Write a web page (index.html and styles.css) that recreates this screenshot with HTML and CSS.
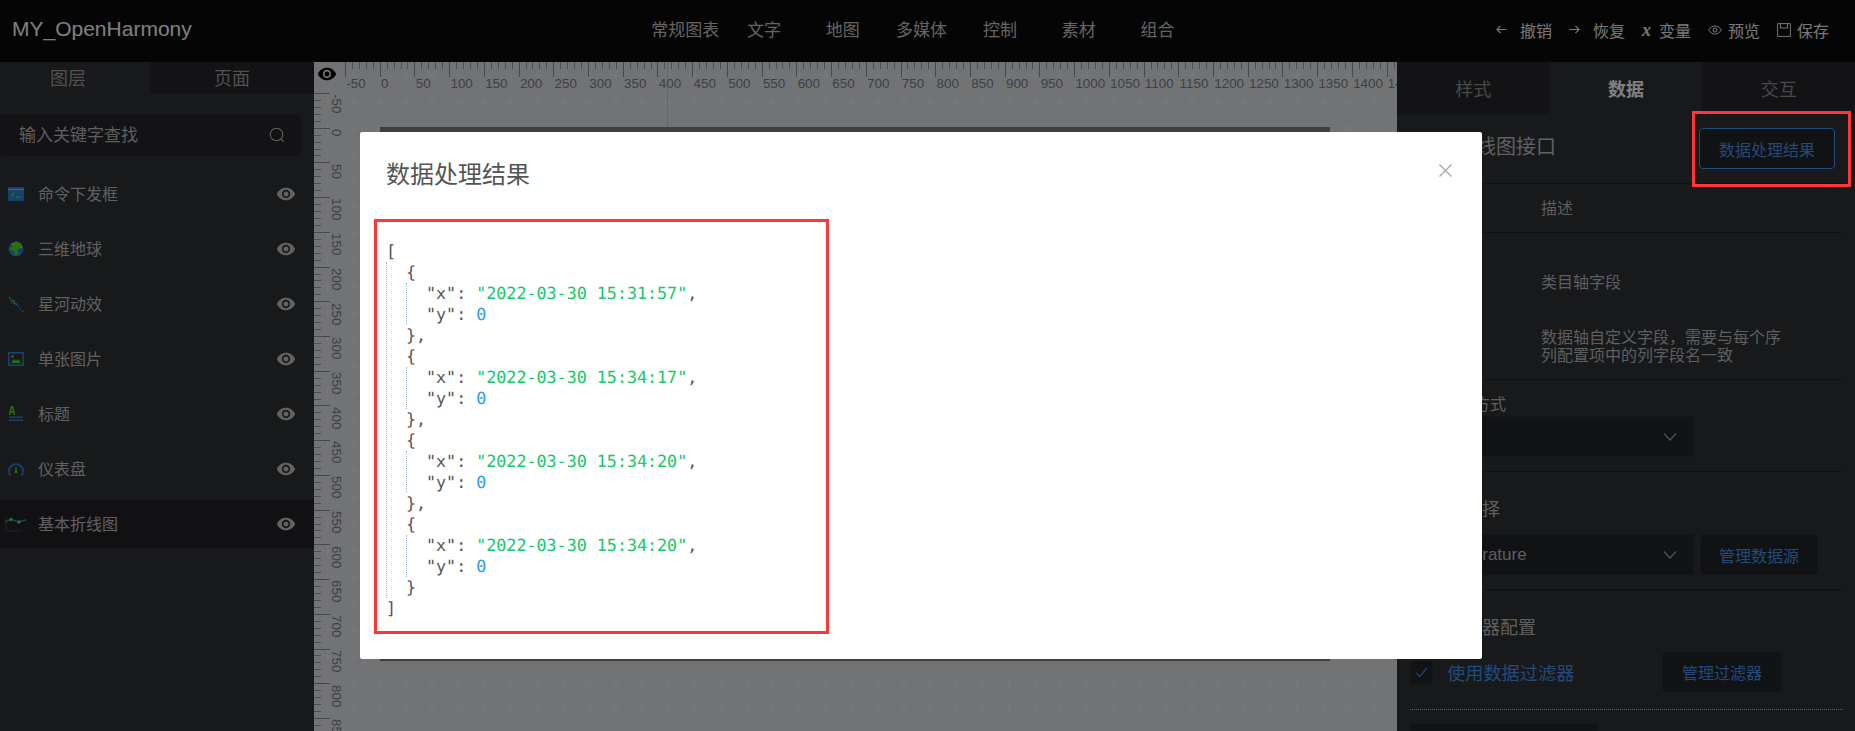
FILE: index.html
```html
<!DOCTYPE html>
<html lang="zh-CN">
<head>
<meta charset="utf-8">
<title>MY_OpenHarmony</title>
<link rel="stylesheet" href="styles.css">
</head>
<body>
<svg class="sprite" aria-hidden="true">
  <symbol id="eye" viewBox="0 0 24 24"><path d="M12 4.500C7 4.500 2.730 7.610 1 12c1.730 4.390 6 7.500 11 7.500s9.270-3.110 11-7.500c-1.730-4.390-6-7.500-11-7.500zM12 17c-2.760 0-5-2.240-5-5s2.240-5 5-5 5 2.240 5 5-2.240 5-5 5zm0-8c-1.660 0-3 1.340-3 3s1.340 3 3 3 3-1.340 3-3-1.340-3-3-3z"/></symbol>
  <symbol id="chev" viewBox="0 0 14 10"><path d="M1 1.500l6 6.500 6-6.500" fill="none" stroke="currentColor" stroke-width="1.200"/></symbol>
</svg>

<header class="topbar">
  <div class="logo">MY_OpenHarmony</div>
  <nav class="nav">
    <span class="nav-item">常规图表</span>
    <span class="nav-item">文字</span>
    <span class="nav-item">地图</span>
    <span class="nav-item">多媒体</span>
    <span class="nav-item">控制</span>
    <span class="nav-item">素材</span>
    <span class="nav-item">组合</span>
  </nav>
  <div class="actions">
    <span class="action wide"><svg class="ai" viewBox="0 0 12 12"><path d="M11.500 6H1M5 2L1 6l4 4" fill="none" stroke="currentColor" stroke-width="1.300"/></svg>撤销</span>
    <span class="action wide"><svg class="ai" viewBox="0 0 12 12"><path d="M.5 6H11M7 2l4 4-4 4" fill="none" stroke="currentColor" stroke-width="1.300"/></svg>恢复</span>
    <span class="action mid"><i class="var-x">x</i>变量</span>
    <span class="action"><svg class="ai-l" viewBox="0 0 14 14"><path d="M.7 7C2.200 4.300 4.400 3 7 3s4.800 1.300 6.300 4c-1.500 2.700-3.700 4-6.300 4S2.200 9.700.7 7z" fill="none" stroke="currentColor"/><circle cx="7" cy="7" r="2" fill="none" stroke="currentColor"/></svg>预览</span>
    <span class="action"><svg class="ai-l" viewBox="0 0 14 14"><path d="M.6.6h12.800v12.800H.6zM3.500.6V5h7V.6" fill="none" stroke="currentColor"/></svg>保存</span>
  </div>
</header>

<main class="workspace">
  <aside class="layers">
    <div class="layer-tabs">
      <div class="layer-tab on">图层</div>
      <div class="layer-tab">页面</div>
    </div>
    <div class="search">
      <span class="search-txt">输入关键字查找</span>
      <svg class="search-ic" viewBox="0 0 16 16"><circle cx="7.500" cy="7.500" r="6.300" fill="none" stroke="currentColor" stroke-width="1.100"/><path d="M12 12l2.800 2.800" stroke="currentColor" stroke-width="1.100"/></svg>
    </div>
    <ul class="layer-list">
      <li class="layer">
        <svg class="li-ic" viewBox="0 0 16 16"><rect y="1" width="16" height="14" fill="#2f80d8"/><rect y="3" width="16" height="1" fill="#9cc8f5"/><path d="M6 7L4 9l2 2" fill="none" stroke="#56e020" stroke-width="1.500"/><path d="M8 11h4" stroke="#56e020" stroke-width="1.500"/></svg>
        <span class="li-name">命令下发框</span>
        <svg class="li-eye"><use href="#eye"/></svg>
      </li>
      <li class="layer">
        <svg class="li-ic" viewBox="0 0 16 16"><circle cx="8" cy="8" r="7.500" fill="#2f80d8"/><path d="M3 2.500L8 .5l5 2 2 4.500-3.500.5-2 1.500.5 4-2.500 2-1-4-3-1.500L1 7l3.500-1L3 2.500z" fill="#56e020"/></svg>
        <span class="li-name">三维地球</span>
        <svg class="li-eye"><use href="#eye"/></svg>
      </li>
      <li class="layer">
        <svg class="li-ic" viewBox="0 0 18 18"><g fill="#56e020"><rect x="1" y="1" width="1.500" height="1.500"/><rect x="4" y="4" width="2" height="2"/><rect x="6" y="7" width="2" height="2"/><rect x="9" y="9" width="1.500" height="1.500"/><rect x="3" y="6" width="1.500" height="1.500"/></g><g fill="#3a9cff"><rect x="2" y="3" width="1.500" height="1.500"/><rect x="6" y="5" width="2" height="2"/><rect x="8" y="8" width="2" height="2"/><rect x="11" y="11" width="1.500" height="1.500"/><rect x="13" y="14" width="1.500" height="1.500"/><rect x="16" y="16.500" width="1.500" height="1.500"/></g></svg>
        <span class="li-name">星河动效</span>
        <svg class="li-eye"><use href="#eye"/></svg>
      </li>
      <li class="layer">
        <svg class="li-ic" viewBox="0 0 16 16"><rect x=".8" y="1.800" width="14.400" height="12.400" fill="none" stroke="#2f80d8" stroke-width="1.600"/><path d="M3 12l3-4 2 2 2-2 3 4z" fill="#56e020"/><circle cx="4.500" cy="5.500" r="1.300" fill="#56e020"/></svg>
        <span class="li-name">单张图片</span>
        <svg class="li-eye"><use href="#eye"/></svg>
      </li>
      <li class="layer">
        <svg class="li-ic" viewBox="0 0 16 16"><path d="M1.500 9L3.500.5h1L6.500 9M2.500 6h3" fill="none" stroke="#56e020" stroke-width="1.400"/><rect x="1" y="10.500" width="14" height="1.500" fill="#2f80d8"/><rect x="1" y="13.500" width="14" height="1.500" fill="#2f80d8"/></svg>
        <span class="li-name">标题</span>
        <svg class="li-eye"><use href="#eye"/></svg>
      </li>
      <li class="layer">
        <svg class="li-ic" viewBox="0 0 16 16"><path d="M2.500 14.500A7 7 0 1 1 13.500 14.500" fill="none" stroke="#2f80d8" stroke-width="1.800"/><path d="M8 5l1.500 7h-3z" fill="#56e020"/></svg>
        <span class="li-name">仪表盘</span>
        <svg class="li-eye"><use href="#eye"/></svg>
      </li>
      <li class="layer active">
        <svg class="li-ic wide-ic" viewBox="0 0 22 16"><path d="M1 1v14h16" fill="none" stroke="#444" stroke-width="1.200"/><path d="M0 6l6-3 7 3 8-2" fill="none" stroke="#2f80d8" stroke-width="1.400"/><circle cx="6" cy="3.500" r="1.800" fill="#56e020"/><circle cx="14" cy="6" r="1.800" fill="#56e020"/></svg>
        <span class="li-name">基本折线图</span>
        <svg class="li-eye"><use href="#eye"/></svg>
      </li>
    </ul>
  </aside>

  <section class="canvas">
    <svg class="grid" aria-hidden="true">
      <defs><pattern id="plus" width="26.200" height="26.400" patternUnits="userSpaceOnUse"><path d="M9 13.500h9M13.500 9v9" stroke="#f2f4f8" stroke-width="1"/></pattern></defs>
      <rect width="100%" height="100%" fill="url(#plus)"/>
    </svg>
    <div class="guide"></div>
    <div class="screen"></div>
    <div class="ruler-top">
      <div class="ticks-top"></div>
      <div class="nums-top">
        <span>-50</span><span>0</span><span>50</span><span>100</span><span>150</span><span>200</span><span>250</span><span>300</span><span>350</span><span>400</span><span>450</span><span>500</span><span>550</span><span>600</span><span>650</span><span>700</span><span>750</span><span>800</span><span>850</span><span>900</span><span>950</span><span>1000</span><span>1050</span><span>1100</span><span>1150</span><span>1200</span><span>1250</span><span>1300</span><span>1350</span><span>1400</span><span>1450</span>
      </div>
    </div>
    <div class="ruler-left">
      <div class="ticks-left"></div>
      <div class="nums-left">
        <span>-50</span><span>0</span><span>50</span><span>100</span><span>150</span><span>200</span><span>250</span><span>300</span><span>350</span><span>400</span><span>450</span><span>500</span><span>550</span><span>600</span><span>650</span><span>700</span><span>750</span><span>800</span><span>850</span>
      </div>
    </div>
    <svg class="ruler-eye"><use href="#eye"/></svg>
  </section>

  <aside class="props">
    <div class="prop-tabs">
      <div class="prop-tab">样式</div>
      <div class="prop-tab on">数据</div>
      <div class="prop-tab">交互</div>
    </div>
    <div class="prop-title">
      <h2 class="prop-h">基本折线图接口</h2>
      <button class="btn btn-primary">数据处理结果</button>
    </div>
    <div class="prop-body">
      <div class="tbl-head"><span>字段</span><span>描述</span></div>
      <div class="tbl-rows">
        <div class="tbl-row r1"><span>x</span><span>类目轴字段</span></div>
        <div class="tbl-row r2"><span>y</span><span>数据轴自定义字段，需要与每个序列配置项中的列字段名一致</span></div>
      </div>
      <div class="sec sec-a">
        <div class="lbl-sm">数据请求方式</div>
        <div class="sel-row"><div class="sel"><span>GET</span><svg class="chev"><use href="#chev"/></svg></div></div>
      </div>
      <div class="sec sec-b">
        <div class="lbl">数据源选择</div>
        <div class="sel-row">
          <div class="sel"><span>temperature</span><svg class="chev"><use href="#chev"/></svg></div>
          <button class="btn btn-plain src">管理数据源</button>
        </div>
      </div>
      <div class="sec-c">
        <div class="lbl">数据过滤器配置</div>
        <div class="filter-row">
          <span class="check"><svg viewBox="0 0 14 12"><path d="M1 6l4 4.500L13 1" fill="none" stroke="currentColor" stroke-width="1.200"/></svg></span>
          <span class="filter-txt">使用数据过滤器</span>
          <button class="btn btn-plain flt">管理过滤器</button>
        </div>
        <div class="dots"></div>
        <div class="bottom-box"></div>
      </div>
    </div>
  </aside>
</main>

<div class="mask">
  <div class="modal">
    <div class="modal-head">
      <div class="modal-title">数据处理结果</div>
      <svg class="close" viewBox="0 0 13 13"><path d="M.5.5l12 12M12.500.5l-12 12" stroke="currentColor" stroke-width="1.100"/></svg>
    </div>
    <div class="json-box">
      <div class="json">
        <div>[</div>
        <div class="ind">
          <div>{</div>
          <div class="ind"><div>"x": <b class="s">"2022-03-30 15:31:57"</b>,</div><div>"y": <b class="n">0</b></div></div>
          <div>},</div>
          <div>{</div>
          <div class="ind"><div>"x": <b class="s">"2022-03-30 15:34:17"</b>,</div><div>"y": <b class="n">0</b></div></div>
          <div>},</div>
          <div>{</div>
          <div class="ind"><div>"x": <b class="s">"2022-03-30 15:34:20"</b>,</div><div>"y": <b class="n">0</b></div></div>
          <div>},</div>
          <div>{</div>
          <div class="ind"><div>"x": <b class="s">"2022-03-30 15:34:20"</b>,</div><div>"y": <b class="n">0</b></div></div>
          <div>}</div>
        </div>
        <div>]</div>
      </div>
    </div>
  </div>
  <div class="note-box"></div>
</div>
</body>
</html>
```
FILE: styles.css
```css
* { box-sizing: border-box; }
html, body { margin: 0; height: 731px; overflow: hidden; }
body {
  width: 1855px;
  font-family: "Liberation Sans", "Noto Sans CJK SC", sans-serif;
  font-size: 16px;
  color: #c0c0c0;
  background: #313236;
}
.sprite { width: 0; height: 0; position: absolute; }

/* top bar */
.topbar { height: 62px; background: #0a0a0a; display: flex; align-items: center; }
.logo { width: 633px; margin-left: 12px; font-size: 21px; color: #fff; white-space: nowrap; margin-top: -4px; }
.nav { display: flex; margin-top: -6px; margin-left: 1px; }
.nav-item { width: 78.7px; text-align: center; font-size: 17px; color: #c8c8c8; white-space: nowrap; }
.actions { margin-left: auto; padding-right: 26px; display: flex; gap: 17px; color: #f0f0f0; font-size: 16px; margin-top: -3px; }
.action { display: flex; align-items: center; gap: 6px; }
.action.wide { gap: 13px; }
.action.mid { gap: 8px; }
.ai { width: 11px; height: 11px; }
.ai-l { width: 14px; height: 14px; }
.var-x { font-family: "Liberation Serif", serif; font-weight: bold; font-size: 18px; line-height: 16px; width: 9px; }

/* layout */
.workspace { display: flex; height: 669px; }

/* layers */
.layers { width: 314px; flex: none; background: #313236; }
.layer-tabs { display: flex; height: 32px; }
.layer-tab { flex: 1; display: flex; align-items: center; justify-content: center; font-size: 18px; background: #26272b; color: #a0a0a0; padding-bottom: 2px; }
.layer-tab.on { flex: none; width: 150px; background: #313236; padding-right: 14px; }
.search { margin-top: 20px; width: 301px; height: 42px; background: #26272b; border-radius: 4px; display: flex; align-items: center; justify-content: space-between; padding: 0 16px 0 19px; font-size: 17px; color: #bcbcbc; }
.search-txt { margin-top: -4px; }
.search-ic { width: 16px; height: 16px; }
.layer-list { list-style: none; margin: 14px 0 0; padding: 0; }
.layer { height: 48px; margin-bottom: 7px; display: flex; align-items: center; padding-left: 8px; position: relative; }
.layer.active { background: #222327; }
.li-ic { width: 16px; height: 16px; flex: none; }
.wide-ic { width: 22px; margin-left: -3px; margin-right: -3px; }
.li-name { margin-left: 14px; flex: 1; font-size: 16px; color: #c0c0c0; padding-bottom: 2px; }
.li-eye { width: 20px; height: 20px; fill: #c4c4c4; margin-right: 18px; }

/* canvas */
.canvas { flex: 1; position: relative; overflow: hidden; background: #e4e6ea; }
.grid { position: absolute; left: 0; top: 0; width: 100%; height: 100%; }
.guide { position: absolute; left: 353px; top: 0; width: 1px; height: 70px; background: #b8d4dc; }
.screen { position: absolute; left: 66px; top: 65px; width: 950px; height: 534px; background: #808080; }
.ruler-top { position: absolute; left: 31.3px; top: 0; width: 1080px; }
.ticks-top {
  height: 15px;
  background:
    repeating-linear-gradient(90deg, #8a929e 0 1px, transparent 1px 34.72px) 0 0 / 100% 15px no-repeat,
    repeating-linear-gradient(90deg, #9aa0a8 0 1px, transparent 1px 6.944px) 0 0 / 100% 7px no-repeat;
}
.nums-top { display: flex; font-size: 13.4px; line-height: 13px; color: #7a828c; }
.nums-top span { flex: none; width: 34.72px; padding-left: 1px; white-space: nowrap; }
.ruler-left { position: absolute; left: 0; top: 31.3px; display: flex; height: 660px; }
.ticks-left {
  width: 16px;
  background:
    repeating-linear-gradient(180deg, #8a929e 0 1px, transparent 1px 34.72px) 0 0 / 16px 100% no-repeat,
    repeating-linear-gradient(180deg, #9aa0a8 0 1px, transparent 1px 6.944px) 0 0 / 7px 100% no-repeat;
}
.nums-left { display: flex; flex-direction: column; font-size: 13.4px; line-height: 13px; color: #7a828c; width: 13px; }
.nums-left span { flex: none; height: 34.72px; padding-top: 1px; writing-mode: vertical-rl; white-space: nowrap; }
.ruler-eye { position: absolute; left: 3px; top: 2px; width: 20px; height: 20px; fill: #000; }

/* properties */
.props { width: 458px; flex: none; background: #313236; }
.prop-tabs { display: flex; height: 52px; }
.prop-tab { flex: 1; display: flex; align-items: center; justify-content: center; font-size: 18px; background: #26272b; color: #909090; }
.prop-tab.on { background: #313236; color: #fff; font-weight: bold; }
.prop-title { height: 70px; display: flex; align-items: center; justify-content: space-between; padding: 0 20px 0 19px; border-bottom: 1px solid #222327; }
.prop-h { margin: 0 0 6px; font-size: 20px; font-weight: normal; color: #c0c0c0; }
.btn { font: inherit; font-size: 16px; background: #232428; border-radius: 4px; cursor: pointer; padding: 0; color: #4694f2; }
.btn-primary { width: 136px; height: 41px; border: 1px solid #3e94fa; }
.btn-plain { border: 1px solid #2a2b30; }
.prop-body { margin: 0 12px 0 13px; }
.tbl-head { height: 49px; display: grid; grid-template-columns: 131px 244px; align-items: center; border-bottom: 1px solid #222327; color: #bcbcbc; padding-bottom: 2px; }
.tbl-rows { height: 147px; border-bottom: 1px solid #222327; }
.tbl-row { display: grid; grid-template-columns: 131px 244px; color: #bcbcbc; line-height: 18px; }
.r1 { padding-top: 41px; }
.r2 { padding-top: 37px; }
.sec { border-bottom: 1px solid #222327; }
.sec-a { height: 92px; padding-top: 13px; }
.sec-b { height: 118px; padding-top: 25px; }
.sec-c { padding-top: 25px; }
.lbl-sm { font-size: 16px; line-height: 24px; color: #bcbcbc; }
.lbl { font-size: 18px; line-height: 26px; color: #bcbcbc; }
.sec-a .sel-row { margin-top: -1px; }
.sec-b .sel-row { margin-top: 11px; }
.sel-row { display: flex; gap: 6px; }
.sel { width: 284px; height: 41px; background: #232428; border: 1px solid #2c2d32; display: flex; align-items: center; justify-content: space-between; padding: 0 16px 0 24px; font-size: 17px; color: #bcbcbc; }
.chev { width: 14px; height: 10px; color: #a8a8a8; }
.src { width: 118px; height: 41px; }
.filter-row { display: flex; align-items: center; height: 40px; margin-top: 11px; }
.check { width: 23px; height: 23px; background: #232428; border: 1px solid #2c2d32; border-radius: 2px; display: flex; align-items: center; justify-content: center; color: #4694f2; }
.check svg { width: 13px; height: 11px; }
.filter-txt { margin-left: 14px; font-size: 18.2px; color: #4694f2; white-space: nowrap; width: 215px; }
.flt { width: 120px; height: 40px; }
.dots { margin-top: 17px; border-top: 1px dotted #bcbcbc; }
.bottom-box { margin-top: 13px; width: 188px; height: 40px; background: #232428; border: 1px solid #2c2d32; }

/* modal */
.mask { position: fixed; left: 0; top: 0; width: 1855px; height: 731px; background: rgba(0, 0, 0, .5); padding: 132px 0 0 360px; }
.modal { width: 1122px; height: 527px; background: #fff; border-radius: 2px; }
.modal-head { height: 87px; padding: 24px 30px 0 26px; display: flex; justify-content: space-between; align-items: flex-start; }
.modal-title { font-size: 24px; line-height: 38px; color: #555; }
.close { width: 13px; height: 13px; margin-top: 8px; color: #a0a0a0; }
.json-box { margin-left: 14px; width: 455px; height: 415px; border: 3px solid #ff3636; padding: 19px 0 0 9px; }
.json { font-family: "DejaVu Sans Mono", "Liberation Mono", monospace; font-size: 16.7px; line-height: 21px; color: #555; white-space: nowrap; text-rendering: geometricPrecision; }
.ind { padding-left: 19px; border-left: 1px dotted #a8b4c8; }
.json b { font-weight: normal; }
.s { color: #16c868; }
.n { color: #2c9cf0; }
.note-box { position: absolute; left: 1692px; top: 111px; width: 159px; height: 76px; border: 3px solid #ff3636; }
```
